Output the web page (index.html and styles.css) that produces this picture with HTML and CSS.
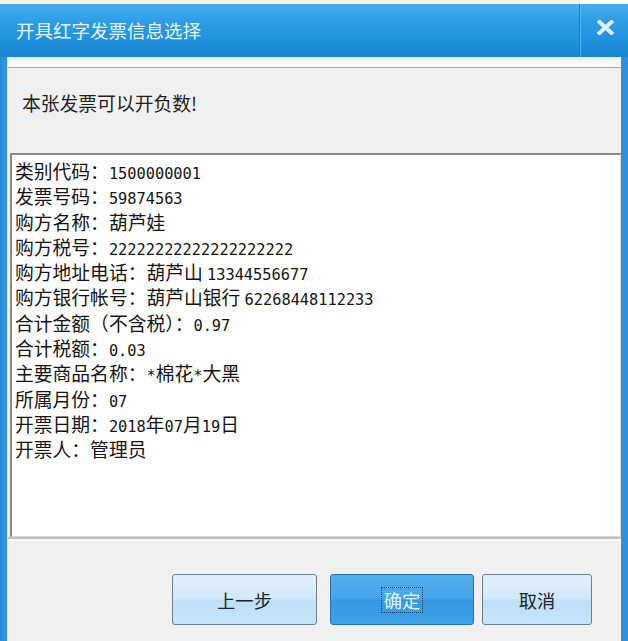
FILE: index.html
```html
<!DOCTYPE html>
<html lang="zh-CN">
<head>
<meta charset="utf-8">
<title>开具红字发票信息选择</title>
<link rel="stylesheet" href="styles.css">
</head>
<body>
<div class="strip"><div class="strip-fill"></div><div class="strip-white"></div></div>
<div class="window">
  <div class="titlebar">
    <div class="title">开具红字发票信息选择</div>
    <div class="close">
      <svg width="17" height="15" viewBox="0 0 17 15"><path d="M2.5 2 L14.5 13 M14.5 2 L2.5 13" stroke="#dcf3ff" stroke-width="4" stroke-linecap="square" fill="none"/></svg>
    </div>
  </div>
  <div class="frame">
    <div class="client">
      <div class="client-top"></div>
      <div class="msg">本张发票可以开负数!</div>
      <div class="textbox">
        <div class="row">类别代码：<span class="num">1500000001</span></div>
        <div class="row">发票号码：<span class="num">59874563</span></div>
        <div class="row">购方名称：葫芦娃</div>
        <div class="row">购方税号：<span class="num">22222222222222222222</span></div>
        <div class="row">购方地址电话：葫芦山 <span class="num">13344556677</span></div>
        <div class="row">购方银行帐号：葫芦山银行 <span class="num">62268448112233</span></div>
        <div class="row">合计金额（不含税）：<span class="num">0.97</span></div>
        <div class="row">合计税额：<span class="num">0.03</span></div>
        <div class="row">主要商品名称：<span class="num">*</span>棉花<span class="num">*</span>大黑</div>
        <div class="row">所属月份：<span class="num">07</span></div>
        <div class="row">开票日期：<span class="num">2018</span>年<span class="num">07</span>月<span class="num">19</span>日</div>
        <div class="row">开票人：管理员</div>
      </div>
      <div class="btnbar">
        <button class="btn btn-prev">上一步</button>
        <button class="btn btn-ok"><span class="focus">确定</span></button>
        <button class="btn btn-cancel">取消</button>
      </div>
    </div>
  </div>
</div>
</body>
</html>
```
FILE: styles.css
```css
html, body {
  margin: 0;
  padding: 0;
}
body {
  width: 628px;
  height: 641px;
  overflow: hidden;
  background: #f5f3ea;
  font-family: "Noto Sans CJK SC", "Noto Sans", sans-serif;
}
.strip {
  display: flex;
  height: 4px;
}
.strip-fill {
  flex: 1;
  background: #f6f4ea;
}
.strip-white {
  width: 48px;
  background: #ffffff;
}
.window {
  display: flex;
  flex-direction: column;
  height: 637px;
  background: #2f90d9;
}
.titlebar {
  height: 53px;
  display: flex;
  align-items: center;
  background: linear-gradient(#45adee 0%, #2c9ce6 35%, #1f8fdc 75%, #1c86d2 100%);
}
.title {
  flex: 1;
  padding-left: 16px;
  padding-bottom: 1px;
  font-size: 18.5px;
  color: #e6f6ff;
}
.close {
  width: 49px;
  height: 53px;
  display: flex;
  align-items: center;
  justify-content: center;
  padding-bottom: 6px;
  box-sizing: border-box;
  border-left: 1px solid #1b7cc6;
  box-shadow: inset 1px 0 0 #55b6ee;
}
.close svg {
  display: block;
  margin-left: 2px;
}
.frame {
  flex: 1;
  display: flex;
  padding: 0 7px;
  background: linear-gradient(90deg, #2a8ad4 0, #3497de 6px, #2f90d9 7px);
}
.client {
  flex: 1;
  display: flex;
  flex-direction: column;
  background: #f0f0f0;
  border-left: 1px solid #cfe6f4;
}
.client-top {
  height: 10px;
  background: linear-gradient(#e0f3fb 0, #e0f3fb 3px, #f8f8f8 3px);
  border-bottom: 1px solid #aaa4b6;
}
.msg {
  height: 85px;
  box-sizing: border-box;
  padding: 22px 0 0 14px;
  font-size: 18.8px;
  line-height: 26px;
  color: #1e1e1e;
}
.textbox {
  margin: 0 0 0 2px;
  height: 384px;
  box-sizing: border-box;
  border-style: solid;
  border-width: 2px 1px 1px 2px;
  border-color: #8a8a8a #d8d8d8 #d8d8d8 #8a8a8a;
  background: #ffffff;
  padding: 3px 3px;
  font-size: 18.8px;
  color: #141414;
}
.row {
  height: 25.3px;
  line-height: 25.3px;
  white-space: nowrap;
}
.num {
  font-family: "DejaVu Sans Mono", monospace;
  font-size: 15.3px;
  line-height: 1;
}
.btnbar {
  flex: 1;
  display: flex;
  justify-content: flex-end;
  align-items: flex-start;
  gap: 8px;
  padding: 35px 29px 0 0;
  border-top: 2px solid #c2c2c2;
  box-shadow: inset 0 2px 0 #fafafa;
}
.btn {
  height: 51px;
  border: 1px solid #6f7c8a;
  border-radius: 3px;
  font-family: "Noto Sans CJK SC", sans-serif;
  font-size: 18.3px;
  color: #1a2430;
  padding: 0;
  display: flex;
  align-items: center;
  justify-content: center;
  background: linear-gradient(#e0f0fc 0%, #d2eafb 48%, #bfe0f8 52%, #c4e4fa 100%);
}
.btn-prev {
  width: 145px;
  margin-right: 5px;
}
.btn-ok {
  width: 144px;
  color: #e0f6ff;
  border-color: #2b73b0;
  background: linear-gradient(#52aeee 0%, #46a5ea 48%, #3397e2 52%, #3ea2ea 100%);
}
.btn-cancel {
  width: 110px;
}
.focus {
  color: #e0f6ff;
  outline: 1px dotted #1d3c5c;
  padding: 1px 2px;
  line-height: 22px;
}
```
